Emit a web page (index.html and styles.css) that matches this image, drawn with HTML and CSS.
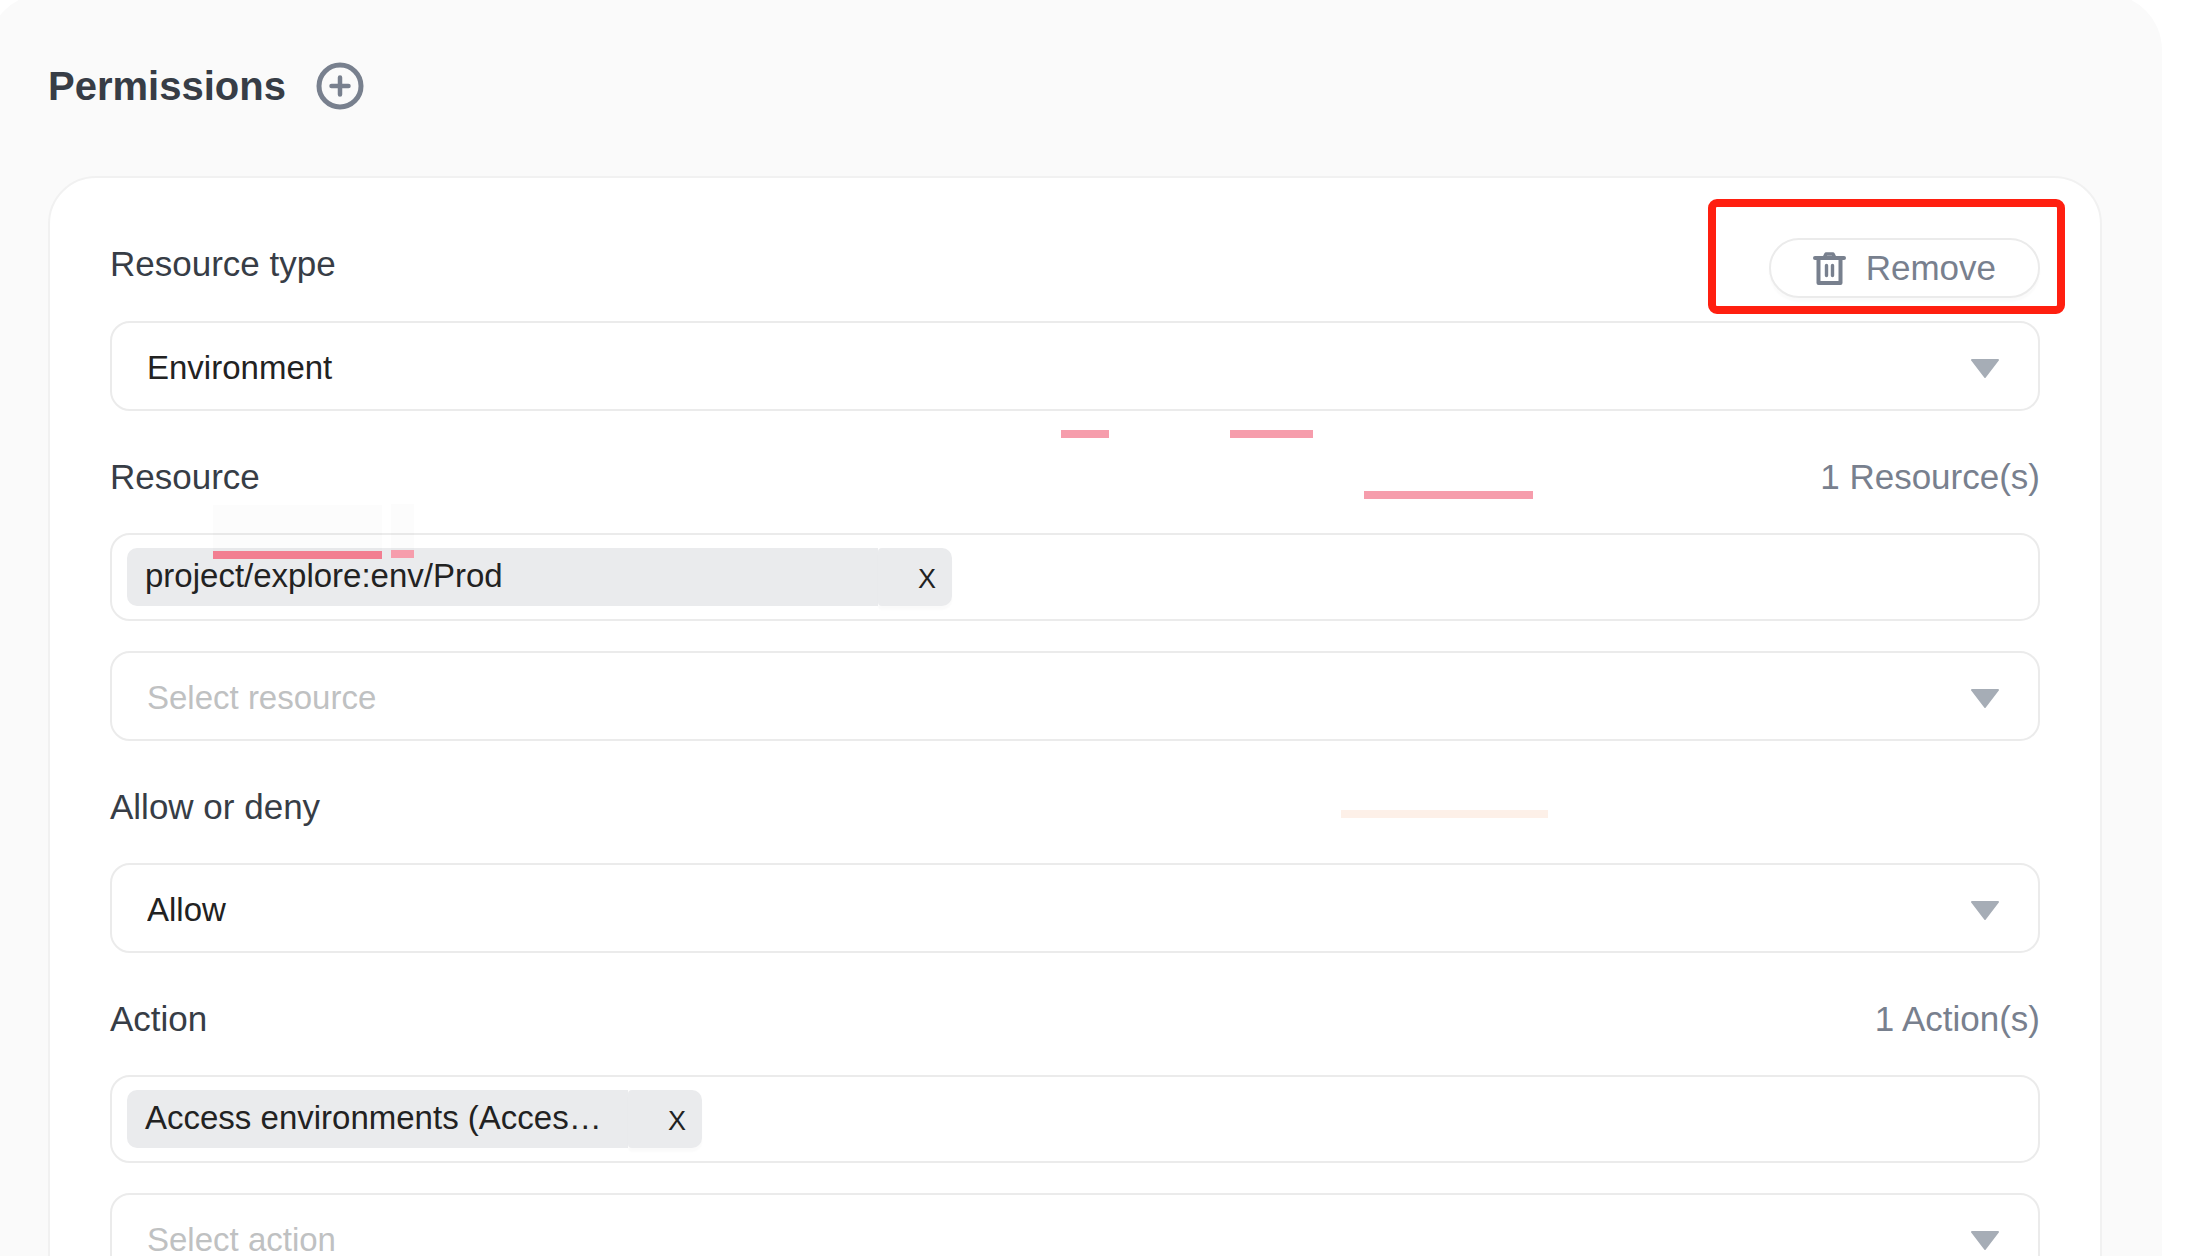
FILE: index.html
```html
<!DOCTYPE html>
<html lang="en">
<head>
  <meta charset="UTF-8">
  <meta name="viewport" content="width=device-width, initial-scale=1.0">
  <title>Permissions</title>
  <link rel="stylesheet" href="styles.css">
</head>
<body>
  <main class="panel">
    <header class="panel-header">
      <h1>Permissions</h1>
      <button type="button" class="add-btn" aria-label="Add permission">
        <svg width="48" height="48" viewBox="0 0 48 48" fill="none" stroke="currentColor">
          <circle cx="24" cy="24" r="21" stroke-width="5"/>
          <path d="M24 15.500v17M15.500 24h17" stroke-width="4.500" stroke-linecap="round"/>
        </svg>
      </button>
    </header>

    <form class="card">
      <!-- Resource type -->
      <div class="field-head field-head-first">
        <label for="resource-type">Resource type</label>
        <button type="button" class="remove-btn">
          <svg width="33" height="33" viewBox="0 0 33 33" fill="none" stroke="currentColor">
            <path d="M5.500 7v24h22V7" stroke-width="4" stroke-linejoin="round"/>
            <path d="M2 6h29" stroke-width="4" stroke-linecap="round"/>
            <path d="M11.500 5L13 2h7L21.500 5" stroke-width="3.500" stroke-linejoin="round"/>
            <path d="M13.500 13.500v10M19.500 13.500v10" stroke-width="3.400" stroke-linecap="round"/>
          </svg>
          Remove
        </button>
        <div class="highlight"></div>
      </div>
      <div class="select-box">
        <select id="resource-type">
          <option>Environment</option>
        </select>
        <svg class="arrow" width="28" height="19" viewBox="0 0 28 19"><path d="M1 1h26L14 18z"/></svg>
      </div>

      <!-- Resource -->
      <div class="field-head">
        <label for="resource">Resource</label>
        <span class="count">1 Resource(s)</span>
      </div>
      <div class="tag-box">
        <div class="tag tag-wide">
          <span class="tag-text">project/explore:env/Prod</span>
          <button type="button" class="tag-close" aria-label="Remove resource">X</button>
        </div>
      </div>
      <div class="select-box">
        <select id="resource" class="placeholder">
          <option>Select resource</option>
        </select>
        <svg class="arrow" width="28" height="19" viewBox="0 0 28 19"><path d="M1 1h26L14 18z"/></svg>
      </div>

      <!-- Allow or deny -->
      <div class="field-head">
        <label for="effect">Allow or deny</label>
      </div>
      <div class="select-box">
        <select id="effect">
          <option>Allow</option>
          <option>Deny</option>
        </select>
        <svg class="arrow" width="28" height="19" viewBox="0 0 28 19"><path d="M1 1h26L14 18z"/></svg>
      </div>

      <!-- Action -->
      <div class="field-head">
        <label for="action">Action</label>
        <span class="count">1 Action(s)</span>
      </div>
      <div class="tag-box">
        <div class="tag">
          <span class="tag-text">Access environments (Acces…</span>
          <button type="button" class="tag-close" aria-label="Remove action">X</button>
        </div>
      </div>
      <div class="select-box">
        <select id="action" class="placeholder">
          <option>Select action</option>
        </select>
        <svg class="arrow" width="28" height="19" viewBox="0 0 28 19"><path d="M1 1h26L14 18z"/></svg>
      </div>
    </form>
  </main>

  <!-- Spelling marks floating over the form -->
  <div class="mark mark-1"></div>
  <div class="mark mark-2"></div>
  <div class="mark mark-3"></div>
  <div class="mark mark-4"></div>
  <div class="mark mark-5"></div>
  <div class="mark mark-6"></div>
</body>
</html>
```
FILE: styles.css
```css
* {
  box-sizing: border-box;
}
body {
  position: relative;
  height: 100vh;
  margin: 0;
  overflow: hidden;
  display: flow-root;
  background: #fff;
  color: #373d46;
  font-family: "Liberation Sans", Arial, sans-serif;
  font-size: 35px;
}
button, select {
  font-family: inherit;
  cursor: pointer;
}

/* Panel */
.panel {
  margin: -6px 32px 0 -12px;
  padding: 68px 60px 60px;
  background: #fafafa;
  border-radius: 56px;
}
.panel-header {
  display: flex;
  align-items: center;
  gap: 30px;
  margin-bottom: 66px;
}
h1 {
  margin: 0;
  font-size: 40px;
  line-height: 48px;
}
.add-btn {
  display: flex;
  padding: 0;
  border: none;
  background: none;
  color: #78808e;
}

/* Card */
.card {
  padding: 60px;
  background: #fff;
  border: 2px solid #f1f1f1;
  border-radius: 48px;
}
.field-head {
  position: relative;
  display: flex;
  justify-content: space-between;
  align-items: flex-start;
  margin: 40px 0 30px;
  line-height: 52px;
}
.field-head-first {
  margin: 0 0 23px;
}
.count {
  color: #78808e;
}
.remove-btn {
  display: flex;
  align-items: center;
  gap: 20px;
  height: 60px;
  padding: 0 42px;
  border: 2px solid #ebebeb;
  border-radius: 30px;
  background: #fff;
  box-shadow: 0 4px 2px rgba(0, 0, 0, 0.02);
  color: #78808e;
  font-size: 35px;
}
.highlight {
  position: absolute;
  top: -39px;
  right: -25px;
  bottom: -16px;
  width: 357px;
  border: 8px solid #ff1f10;
  border-radius: 9px;
  pointer-events: none;
}

/* Select */
.select-box {
  display: grid;
  align-items: center;
}
.select-box select {
  grid-area: 1 / 1;
  width: 100%;
  height: 90px;
  padding: 2px 80px 0 35px;
  appearance: none;
  border: 2px solid #ebebeb;
  border-radius: 20px;
  background: #fff;
  color: #222;
  font-size: 33px;
}
.select-box .placeholder {
  color: #bfc1c2;
}
.arrow {
  grid-area: 1 / 1;
  justify-self: end;
  margin: 4px 41px 0 0;
  fill: #a6adb6;
  stroke: #a6adb6;
  stroke-width: 2;
  stroke-linejoin: round;
  pointer-events: none;
}

/* Tags */
.tag-box {
  height: 88px;
  margin-bottom: 30px;
  padding: 13px 15px;
  border: 2px solid #ebebeb;
  border-radius: 20px;
}
.tag {
  display: flex;
  width: 575px;
  height: 58px;
  color: #222;
  font-size: 33px;
}
.tag-wide {
  width: 825px;
}
.tag-text {
  flex: 1;
  padding-left: 18px;
  background: #eaebed;
  border-radius: 10px 0 0 10px;
  line-height: 56px;
  white-space: nowrap;
}
.tag-close {
  width: 74px;
  padding: 4px 16px 0;
  border: none;
  border-radius: 4px 10px 10px 4px;
  background: #eaebed;
  box-shadow: 0 4px 2px rgba(0, 0, 0, 0.02);
  color: #222;
  font-size: 27px;
  text-align: right;
}

/* Marks */
.mark {
  position: absolute;
  height: 8px;
  background: #f69dac;
  pointer-events: none;
}
.mark-1 {
  top: 430px;
  left: 1061px;
  width: 48px;
}
.mark-2 {
  top: 430px;
  left: 1230px;
  width: 83px;
}
.mark-3 {
  top: 491px;
  left: 1364px;
  width: 169px;
}
.mark-4 {
  top: 551px;
  left: 213px;
  width: 169px;
  background: #f27e91;
}
.mark-5 {
  top: 550px;
  left: 391px;
  width: 23px;
}
.mark-6 {
  top: 810px;
  left: 1341px;
  width: 207px;
  background: #fdf0e8;
}
/* faint wash above the two marks on the tag */
.mark-4::before,
.mark-5::before {
  content: "";
  position: absolute;
  bottom: 100%;
  width: 100%;
  height: 46px;
  background: rgba(0, 0, 0, 0.01);
}
```
